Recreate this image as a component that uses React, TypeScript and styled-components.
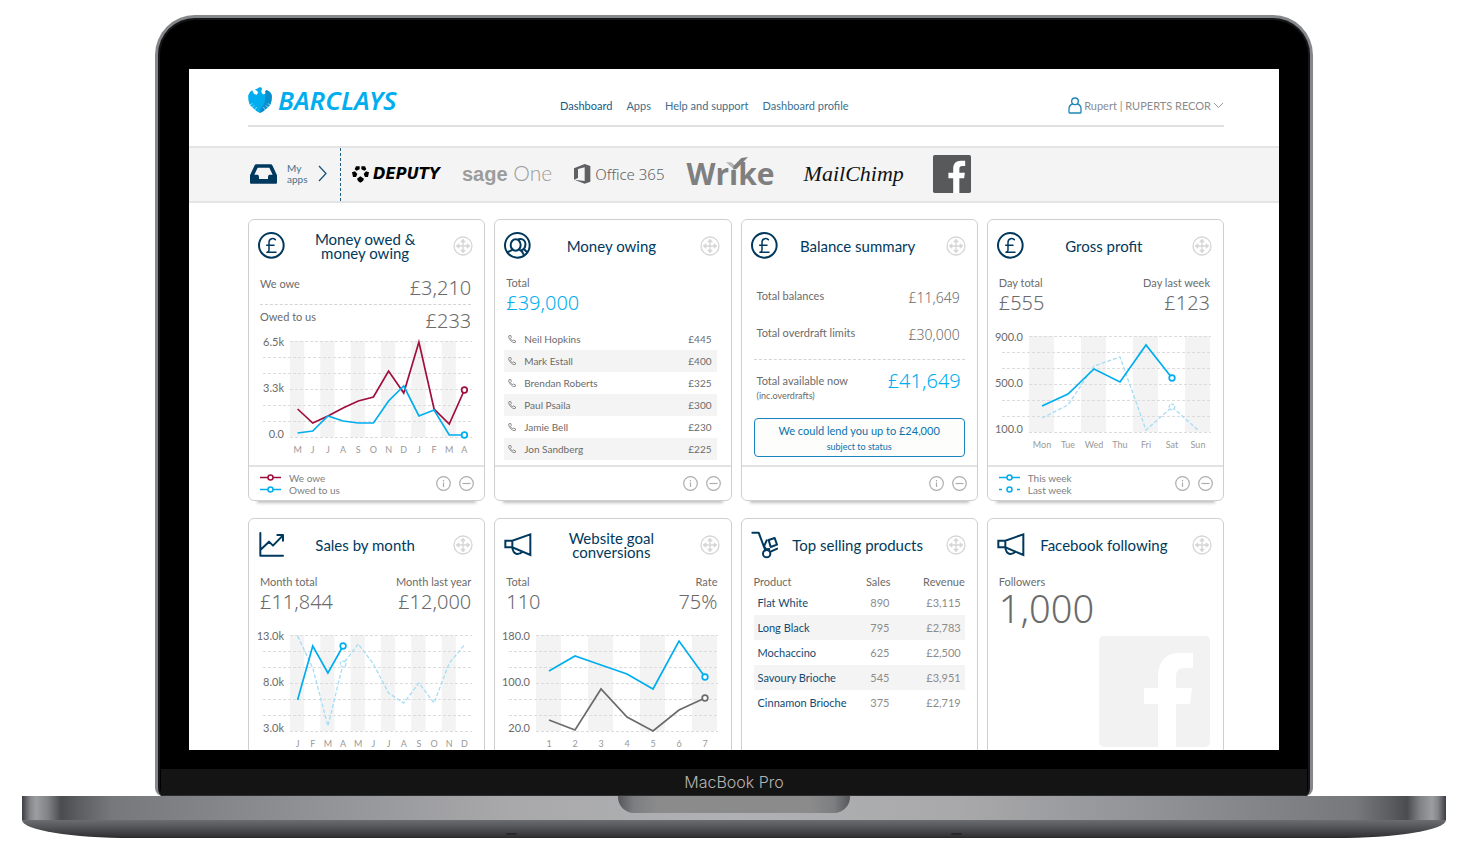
import React from "react";
import styled, { createGlobalStyle } from "styled-components";

const navy = "#00395d";
const cyan = "#00aeef";
const claret = "#a00f3c";
const slate = "#6b6b6b";

const GlobalStyle = createGlobalStyle`
  *, *::before, *::after { box-sizing: border-box; }
  body {
    margin: 0;
    background: #fff;
    color: ${slate};
    font-family: Lato, "Noto Sans", sans-serif;
    font-size: 11px;
    line-height: 16px;
  }
  button { font: inherit; padding: 0; margin: 0; border: 0; background: none; cursor: pointer; }
  a { color: inherit; text-decoration: none; }
  svg { display: block; flex: none; }
  table { border-collapse: collapse; }
`;

/* ---------- Laptop ---------- */

const Laptop = styled.div`
  padding: 15px 22px 24px;
`;

const Lid = styled.div`
  margin: 0 133px;
  border: 3px solid #85878b;
  border-bottom: 0;
  border-radius: 40px 40px 8px 8px;
  background: #000;
  box-shadow: inset 0 0 0 2px #141617;
  overflow: hidden;
`;

const Display = styled.main`
  margin: 51px 31px 19px;
  aspect-ratio: 1090 / 681;
  background: #fff;
  overflow: hidden;
`;

const Chin = styled.div`
  height: 27px;
  margin: 0 3px;
  border-bottom: 1px solid #2c2c2e;
  background: #141414;
  color: #b4b4b6;
  font: 300 16px/27px Inter, sans-serif;
  text-align: center;
`;

const Deck = styled.div`
  display: flex;
  justify-content: center;
  align-items: flex-start;
  height: 24px;
  background: linear-gradient(
    90deg,
    #3c3d42 0,
    #84868a 8px,
    #9c9da1 14px,
    #808286 26px,
    #4b4c50 39px,
    #5c5d60 56px,
    #77787b 90px,
    #929397 300px,
    #a9a9ab 490px,
    #b0b1b4 50%,
    #a9a9ab calc(100% - 490px),
    #929397 calc(100% - 300px),
    #77787b calc(100% - 90px),
    #5c5d60 calc(100% - 56px),
    #4b4c50 calc(100% - 39px),
    #808286 calc(100% - 26px),
    #9c9da1 calc(100% - 14px),
    #84868a calc(100% - 8px),
    #3c3d42 100%
  );
`;

const Notch = styled.div`
  width: 232px;
  height: 17px;
  border-radius: 0 0 16px 16px;
  background: linear-gradient(90deg, #56575a 0, #7d7e80 16px, #8b8b8c 40px, #8b8b8c calc(100% - 40px), #7d7e80 calc(100% - 16px), #56575a 100%);
`;

const Underside = styled.div`
  display: flex;
  justify-content: space-between;
  align-items: flex-end;
  height: 18px;
  padding: 0 484px 3px;
  border-radius: 0 0 110px 110px / 0 0 18px 18px;
  background: linear-gradient(180deg, #6b6c6f 0, #57585c 35%, #3b3b3e 80%, #2a2a2c 100%);
`;

const Foot = styled.span`
  width: 11px;
  height: 2px;
  border-radius: 2px;
  background: #27282a;
`;

/* ---------- Page header ---------- */

const Header = styled.header`
  display: flex;
  align-items: center;
  height: 58px;
  margin: 0 55px 19px 59px;
  padding-top: 17px;
  border-bottom: 2px solid #e0e0e0;
`;

const Brand = styled.a`
  display: flex;
  align-items: center;
  gap: 6px;
  width: 149px;
  margin-bottom: 11px;
  color: ${cyan};
  font: italic 600 26px/26px "Noto Sans", sans-serif;
`;

const Nav = styled.nav`
  display: flex;
  gap: 14px;
  margin-left: 163px;
  white-space: nowrap;
`;

const NavLink = styled.a<{ $current?: boolean }>`
  color: ${(p) => (p.$current ? "#145a84" : "#3d6f8d")};
`;

const UserMenu = styled.button`
  display: flex;
  align-items: center;
  gap: 2px;
  margin-left: auto;
  color: #8c8c8c;
  white-space: nowrap;
`;

/* ---------- Apps bar ---------- */

const AppsBar = styled.section`
  display: flex;
  align-items: center;
  height: 57px;
  padding-left: 61px;
  border-top: 2px solid #e4e4e4;
  border-bottom: 2px solid #e4e4e4;
  background: #f4f4f4;
`;

const MyApps = styled.button`
  display: flex;
  align-items: center;
  align-self: stretch;
  gap: 10px;
  width: 91px;
  padding-bottom: 2px;
  border-right: 1px dashed #1f5d87;
  color: #44718e;
  font-size: 10px;
  line-height: 11px;
  text-align: left;
`;

const AppList = styled.ul`
  display: flex;
  align-items: center;
  gap: 22px;
  margin: 0;
  padding: 0 0 2px 11px;
  list-style: none;
`;

const AppLink = styled.a<{ $wide?: boolean }>`
  display: flex;
  align-items: center;
  gap: 4px;
  padding: 0 ${(p) => (p.$wide ? 7 : 0)}px;
  white-space: nowrap;
`;

const DeputyName = styled.span`
  color: #000;
  font: italic 700 15px/20px "DejaVu Sans", sans-serif;
`;

const SageName = styled.span`
  color: #9c9c9c;
  font: 300 21px/26px Lato, sans-serif;
  b { font: 700 20px/26px "Liberation Sans", sans-serif; }
`;

const OfficeName = styled.span`
  color: #5f6063;
  font: 300 15px/20px "Noto Sans", sans-serif;
`;

const WrikeName = styled.span`
  position: relative;
  color: #7f7f7f;
  font: 700 30px/36px "Open Sans", sans-serif;
  svg { position: absolute; left: 40px; top: 1px; }
`;

const MailChimpName = styled.span`
  color: #111;
  font: italic 400 22px/28px "Liberation Serif", serif;
`;

/* ---------- Cards ---------- */

const Cards = styled.section`
  display: grid;
  grid-template-columns: repeat(4, minmax(0, 1fr));
  grid-auto-rows: 282px;
  gap: 17px 9px;
  padding: 16px 55px 0 59px;
`;

const CardBox = styled.article`
  display: flex;
  flex-direction: column;
  border: 1px solid #cfcfcf;
  border-radius: 6px;
  background: #fff;
  box-shadow: 0 11px 3px -9px rgba(0, 0, 0, 0.25);
`;

const CardHead = styled.header`
  display: grid;
  grid-template-columns: 27px 1fr 20px;
  align-items: center;
  height: 51px;
  padding: 0 11px 0 9px;
`;

const CardTitle = styled.h2`
  margin: 0;
  padding-right: 8px;
  color: ${navy};
  font-size: 15px;
  font-weight: 400;
  line-height: 14px;
  text-align: center;
`;

const CardBody = styled.div`
  flex: 1;
  padding-top: 4px;
`;

const CardFoot = styled.footer`
  display: flex;
  align-items: center;
  gap: 8px;
  height: 35px;
  padding: 0 10px 0 11px;
  border-top: 2px solid #e2e2e2;
`;

const Legend = styled.ul`
  flex: 1;
  margin: 0;
  padding: 0;
  list-style: none;
  color: #808080;
  font-size: 10px;
  line-height: 12px;
  li { display: flex; align-items: center; gap: 8px; }
`;

const Stats = styled.div`
  display: flex;
  justify-content: space-between;
  margin: 0 13px 0 11px;
`;

const Stat = styled.div<{ $right?: boolean }>`
  text-align: ${(p) => (p.$right ? "right" : "left")};
`;

const Figure = styled.div<{ $accent?: boolean; $size?: "m" | "l" | "xl" }>`
  color: ${(p) => (p.$accent ? cyan : slate)};
  font-family: "Noto Sans", sans-serif;
  font-size: ${(p) => (p.$size === "xl" ? 38 : p.$size === "m" ? 14 : 20)}px;
  font-weight: 300;
  line-height: ${(p) => (p.$size === "xl" ? 36 : p.$size === "m" ? 20 : 24)}px;
`;

const OweRow = styled.div`
  display: flex;
  justify-content: space-between;
  align-items: flex-start;
  margin: 0 13px 0 11px;
  padding-top: 1px;
  & + & { padding-top: 4px; margin-top: 4px; border-top: 1px dashed #d4d4d4; }
`;

const DebtorTable = styled.table`
  width: calc(100% - 23px);
  margin: 13px 14px 0 9px;
  font-size: 10px;
  tr:nth-child(even) { background: #f4f4f4; }
  td { height: 22px; padding: 0; }
  td:first-child { width: 20px; padding-left: 4px; }
  td:last-child { padding-right: 5px; text-align: right; }
`;

const BalanceRow = styled.div`
  display: flex;
  justify-content: space-between;
  small { display: block; font-size: 9px; line-height: 14px; }
`;

const Balances = styled.div`
  display: flex;
  flex-direction: column;
  gap: 17px;
  padding: 13px 17px 14px 15px;
`;

const Available = styled.div`
  margin: 0 12px;
  padding: 13px 4px 15px 3px;
  border-top: 1px dashed #d4d4d4;
  ${Figure} { line-height: 16px; }
`;

const LendButton = styled.button`
  display: block;
  width: calc(100% - 24px);
  height: 39px;
  margin: 0 12px;
  border: 1px solid #1c84bd;
  border-radius: 4px;
  background: #fdfdfb;
  color: #0a72ab;
  line-height: 18px;
  small { display: block; font-size: 9px; line-height: 14px; }
`;

const ProductTable = styled.table`
  width: calc(100% - 24px);
  margin: 0 12px;
  table-layout: fixed;
  th { height: 16px; padding: 0; font-weight: 400; text-align: right; }
  th:first-child { width: 96px; text-align: left; }
  th:nth-child(2) { width: 41px; }
  td { height: 25px; padding: 0 4px 0 0; color: #8c8c8c; text-align: right; }
  td:nth-child(2) { padding-right: 1px; }
  td:first-child { padding: 0 0 0 4px; color: #134a72; text-align: left; white-space: nowrap; }
  tbody tr:nth-child(even) { background: #f4f4f4; }
`;

const Watermark = styled.div`
  display: flex;
  justify-content: flex-end;
  margin: 10px 13px 0 0;
`;

/* ---------- Icons ---------- */

const stroke = { fill: "none", stroke: navy, strokeLinecap: "round" as const, strokeLinejoin: "round" as const };

const Eagle = () => (
  <svg width="24" height="26" viewBox="0 0 72 78" aria-hidden="true">
    <path
      fill={cyan}
      d="M20 8 L27 5 L36 0 L42 3 L40 14 L44 22 L52 21 L52 12 L56 9 L66 15 L71 24 Q73 38 67 53 L60 60 L54 66 L46 73 L36 78 L26 73 L18 66 L12 60 L5 53 Q-1 38 1 24 L6 15 L13 10 L18 21 L27 23 L30 16 L27 11 Z"
    />
    <path fill="#0a86c0" d="M52 12 L56 9 L66 15 L71 24 Q73 38 67 53 L60 60 L54 66 L46 73 L36 78 L37 66 Q54 50 52 21 Z" opacity=".8" />
    <path stroke="#fff" strokeWidth="2" fill="none" d="M4 54 L13 50 M11 62 L19 55 M20 69 L26 60 M68 54 L59 50 M61 62 L53 55 M52 69 L46 60" opacity=".8" />
  </svg>
);

const Person = () => (
  <svg width="14" height="17" viewBox="0 0 42 51" fill="none" stroke="#1f85b8" strokeWidth="4" strokeLinejoin="round" aria-hidden="true">
    <circle cx="21" cy="13" r="10" />
    <path d="M14 21 Q3 24 3 35 V46 Q3 48 5 48 H37 Q39 48 39 46 V35 Q39 24 28 21" />
  </svg>
);

const Chevron = ({ down }: { down?: boolean }) =>
  down ? (
    <svg width="11" height="7" viewBox="0 0 11 7" fill="none" stroke="#9a9a9a" aria-hidden="true">
      <path d="M1 1 L5.5 5.5 L10 1" />
    </svg>
  ) : (
    <svg width="9" height="17" viewBox="0 0 9 17" fill="none" stroke="#1d557c" strokeWidth="1.3" aria-hidden="true">
      <path d="M1 1 L8 8.5 L1 16" />
    </svg>
  );

const Tray = () => (
  <svg width="27" height="20" viewBox="0 0 81 60" aria-hidden="true">
    <path fill={navy} fillRule="evenodd" d="M19 1 H62 Q66 1 67 4 L81 34 V56 Q81 59 78 59 H3 Q0 59 0 56 V34 L14 4 Q15 1 19 1 Z M23 11 L13 32 H24 Q27 34 27 40 V45 H54 V40 Q54 34 57 32 H68 L58 11 Z" />
  </svg>
);

const DeputyMark = () => (
  <svg width="17" height="18" viewBox="0 0 51 54" fill="#000" aria-hidden="true">
    <path d="M12 4 H23 V13 L14 17 L8 13 Z M28 4 H39 L43 13 L37 17 L28 13 Z M0 22 L9 19 L16 27 L12 36 L3 36 Z M51 22 L42 19 L35 27 L39 36 L48 36 Z M25 34 L36 41 L33 48 L25 53 L18 48 L15 41 Z" />
  </svg>
);

const OfficeMark = () => (
  <svg width="17" height="20" viewBox="0 0 51 60" fill="#5f6063" aria-hidden="true">
    <path fillRule="evenodd" d="M0 13 L32 0 L49 6 V53 L32 59 L1 47 L32 51 V10 L12 15 V42 L0 47 Z" />
  </svg>
);

const WrikeTick = () => (
  <svg width="22" height="13" viewBox="0 0 66 39" aria-hidden="true">
    <path fill="#f4f4f4" d="M8 8 H40 V39 H8 Z" />
    <path fill="#b5b5b5" d="M0 16 H15 L28 26 L24 37 Z" />
    <path fill="#7f7f7f" d="M66 0 L46 3 L22 28 V38 L32 35 Z" />
  </svg>
);

const FacebookTile = ({ size, fill, glyph }: { size: number; fill: string; glyph: string }) => (
  <svg width={size} height={size} viewBox="0 0 111 111" role="img" aria-label="Facebook">
    <rect width="111" height="111" rx="5" fill={fill} />
    <path fill={glyph} d="M59 111 V68 H45 V52 H59 V41 C59 25 67 17 81 17 H94 V32 H86 C79 32 77 35 77 41 V52 H93 L91 68 H77 V111 Z" />
  </svg>
);

const PoundIcon = () => (
  <svg width="27" height="27" viewBox="0 0 81 81" {...stroke} aria-hidden="true">
    <circle cx="40" cy="40" r="37" strokeWidth="6" />
    <path strokeWidth="4.5" d="M52 23 Q47 19 41 20 Q33 22 33 31 V54 Q33 60 27 61 H54 M26 40 H48" />
  </svg>
);

const DebtorsIcon = () => (
  <svg width="27" height="27" viewBox="0 0 81 81" {...stroke} strokeWidth="6" aria-hidden="true">
    <circle cx="40" cy="40" r="37" />
    <ellipse cx="35" cy="39" rx="15" ry="17" />
    <path d="M44 22 C58 18 66 28 64 40 C63 48 60 52 54 54 M12 60 L26 53 M46 53 Q56 58 58 66 M60 52 L69 60" />
  </svg>
);

const TrendIcon = () => (
  <svg width="27" height="27" viewBox="0 0 81 81" {...stroke} strokeWidth="6" aria-hidden="true">
    <path d="M7 6 V74 H75 M7 57 L33 32 L45 44 L74 14 M58 12 H75 V29" />
  </svg>
);

const MegaphoneIcon = () => (
  <svg width="28" height="27" viewBox="0 0 84 81" {...stroke} strokeWidth="6" strokeLinejoin="miter" aria-hidden="true">
    <path d="M4 29 H25 L79 10 V72 L25 49 H4 Z M25 29 V49 M25 50 Q27 66 38 69 Q49 70 55 62" />
  </svg>
);

const TrolleyIcon = () => (
  <svg width="27" height="29" viewBox="0 0 81 87" {...stroke} strokeWidth="6" aria-hidden="true">
    <path d="M4 8 H23 L43 61 M59 65 L79 56 M53 30 L71 24 L78 44 L59 51 Z M47 31 L39 49 L46 58 L55 57" />
    <circle cx="47" cy="71" r="11" />
  </svg>
);

const MoveIcon = () => (
  <svg width="20" height="20" viewBox="0 0 60 60" fill="none" stroke="#d6d6d6" strokeWidth="4" aria-hidden="true">
    <circle cx="30" cy="30" r="27" />
    <path d="M30 12 V48 M12 30 H48" />
    <path fill="#d6d6d6" strokeWidth="2" d="M30 9 L37 18 H23 Z M30 51 L37 42 H23 Z M9 30 L18 23 V37 Z M51 30 L42 23 V37 Z" />
  </svg>
);

const InfoIcon = () => (
  <svg width="15" height="15" viewBox="0 0 15 15" fill="none" stroke="#adadad" strokeWidth="1.2" aria-hidden="true">
    <circle cx="7.5" cy="7.5" r="6.8" />
    <path d="M7.5 6.5 V11 M7.5 4 V5.4" />
  </svg>
);

const MinusIcon = () => (
  <svg width="15" height="15" viewBox="0 0 15 15" fill="none" stroke="#adadad" strokeWidth="1.2" aria-hidden="true">
    <circle cx="7.5" cy="7.5" r="6.8" />
    <path d="M3.5 7.5 H11.5" />
  </svg>
);

const PhoneIcon = () => (
  <svg width="8" height="8" viewBox="0 0 24 24" fill="none" stroke="#8a8a8a" strokeWidth="3" aria-hidden="true">
    <path d="M3 2 L8 1 L10 8 L7 11 L13 17 L16 15 L23 18 L22 22 Q18 24 13 21 Q3 14 2 6 Z" />
  </svg>
);

const Swatch = ({ color, dashed }: { color: string; dashed?: boolean }) => (
  <svg width="21" height="7" viewBox="0 0 21 7" fill="none" stroke={color} strokeWidth="1.5" aria-hidden="true">
    <path d={dashed ? "M0 3.5 H3 M18 3.5 H21" : "M0 3.5 H8 M13 3.5 H21"} />
    <circle cx="10.5" cy="3.5" r="2.5" />
  </svg>
);

/* ---------- Line chart ---------- */

type Series = { color: string; points: number[]; marker: number; dashed?: boolean };

const PLOT_LEFT = 41;
const PLOT_WIDTH = 182;
const PLOT_TOP = 8;
const GRID_STEP = 16;

const AxisText = styled.text<{ $small?: boolean }>`
  fill: ${(p) => (p.$small ? "#999" : slate)};
  font-size: ${(p) => (p.$small ? 9 : 11)}px;
`;

function LineChart({ ticks, labels, series }: { ticks: string[]; labels: string[]; series: Series[] }) {
  const step = PLOT_WIDTH / labels.length;
  const x = (i: number) => PLOT_LEFT + step * (i + 0.5);
  const y = (v: number) => PLOT_TOP + v;
  return (
    <svg width="235" height="124" viewBox="0 0 235 124" role="img" aria-label="Line chart">
      {labels.map((_, i) =>
        i % 2 === 0 ? (
          <rect key={i} x={PLOT_LEFT + step * i} y={PLOT_TOP} width={step - 1} height={GRID_STEP * 6} fill="#f3f3f3" />
        ) : null
      )}
      {[0, 1, 2, 3, 4, 5, 6].map((i) => (
        <line
          key={i}
          x1={i % 3 === 0 ? PLOT_LEFT : 14}
          x2={PLOT_LEFT + PLOT_WIDTH}
          y1={PLOT_TOP + GRID_STEP * i + 0.5}
          y2={PLOT_TOP + GRID_STEP * i + 0.5}
          stroke="#dcdcdc"
          strokeDasharray="3 2"
        />
      ))}
      {ticks.map((t, i) => (
        <AxisText key={t} x={35} y={PLOT_TOP + 5 + i * 46} textAnchor="end">
          {t}
        </AxisText>
      ))}
      {labels.map((t, i) => (
        <AxisText key={i} $small x={x(i)} y={PLOT_TOP + 112} textAnchor="middle">
          {t}
        </AxisText>
      ))}
      {series.map((s, k) => (
        <g key={k} fill="none" stroke={s.color} strokeWidth={s.dashed ? 1.3 : 1.7}>
          <polyline points={s.points.map((v, i) => `${x(i)},${y(v)}`).join(" ")} strokeDasharray={s.dashed ? "4 2" : undefined} />
          <circle cx={x(s.marker)} cy={y(s.points[s.marker])} r="2.8" fill="#fff" strokeDasharray={s.dashed ? "3 1" : undefined} />
        </g>
      ))}
    </svg>
  );
}

const ChartWrap = styled.div<{ $flush?: boolean }>`
  margin-top: ${(p) => (p.$flush ? 0 : 13)}px;
`;

/* ---------- Card shell ---------- */

type CardProps = { icon: React.ReactNode; title: React.ReactNode; legend?: [string, string, boolean?][]; children: React.ReactNode };

function Card({ icon, title, legend = [], children }: CardProps) {
  return (
    <CardBox>
      <CardHead>
        {icon}
        <CardTitle>{title}</CardTitle>
        <button aria-label="Move card">
          <MoveIcon />
        </button>
      </CardHead>
      <CardBody>{children}</CardBody>
      <CardFoot>
        <Legend>
          {legend.map(([name, color, dashed]) => (
            <li key={name}>
              <Swatch color={color} dashed={dashed} />
              {name}
            </li>
          ))}
        </Legend>
        <button aria-label="Information">
          <InfoIcon />
        </button>
        <button aria-label="Remove card">
          <MinusIcon />
        </button>
      </CardFoot>
    </CardBox>
  );
}

const debtors = [
  ["Neil Hopkins", "£445"],
  ["Mark Estall", "£400"],
  ["Brendan Roberts", "£325"],
  ["Paul Psaila", "£300"],
  ["Jamie Bell", "£230"],
  ["Jon Sandberg", "£225"],
];

const products = [
  ["Flat White", "890", "£3,115"],
  ["Long Black", "795", "£2,783"],
  ["Mochaccino", "625", "£2,500"],
  ["Savoury Brioche", "545", "£3,951"],
  ["Cinnamon Brioche", "375", "£2,719"],
];

const pale = "#a6dcf5";

export default function App() {
  return (
    <Laptop>
      <GlobalStyle />
      <Lid>
        <Display>
          <Header>
            <Brand href="#">
              <Eagle />
              BARCLAYS
            </Brand>
            <Nav>
              <NavLink href="#" $current>Dashboard</NavLink>
              <NavLink href="#">Apps</NavLink>
              <NavLink href="#">Help and support</NavLink>
              <NavLink href="#">Dashboard profile</NavLink>
            </Nav>
            <UserMenu>
              <Person />
              Rupert | RUPERTS RECOR
              <Chevron down />
            </UserMenu>
          </Header>

          <AppsBar>
            <MyApps>
              <Tray />
              <span>My<br />apps</span>
              <Chevron />
            </MyApps>
            <AppList>
              <li><AppLink href="#"><DeputyMark /><DeputyName>DEPUTY</DeputyName></AppLink></li>
              <li><AppLink href="#"><SageName><b>sage</b> One</SageName></AppLink></li>
              <li><AppLink href="#"><OfficeMark /><OfficeName>Office 365</OfficeName></AppLink></li>
              <li><AppLink href="#"><WrikeName>Wrike<WrikeTick /></WrikeName></AppLink></li>
              <li><AppLink href="#" $wide><MailChimpName>MailChimp</MailChimpName></AppLink></li>
              <li><AppLink href="#"><FacebookTile size={38} fill="#58595b" glyph="#fff" /></AppLink></li>
            </AppList>
          </AppsBar>

          <Cards>
            <Card
              icon={<PoundIcon />}
              title={<>Money owed &amp;<br />money owing</>}
              legend={[["We owe", claret], ["Owed to us", cyan]]}
            >
              <OweRow>We owe<Figure>£3,210</Figure></OweRow>
              <OweRow>Owed to us<Figure>£233</Figure></OweRow>
              <ChartWrap $flush>
                <LineChart
                  ticks={["6.5k", "3.3k", "0.0"]}
                  labels={["M", "J", "J", "A", "S", "O", "N", "D", "J", "F", "M", "A"]}
                  series={[
                    { color: claret, points: [68, 82, 75, 67, 60, 56, 30, 52, 1, 68, 83, 49], marker: 11 },
                    { color: cyan, points: [92, 90, 75, 80, 82, 82, 60, 45, 75, 69, 94, 94], marker: 11 },
                  ]}
                />
              </ChartWrap>
            </Card>

            <Card icon={<DebtorsIcon />} title="Money owing">
              <Stats>
                <Stat>Total<Figure $accent>£39,000</Figure></Stat>
              </Stats>
              <DebtorTable>
                <tbody>
                  {debtors.map(([name, sum]) => (
                    <tr key={name}>
                      <td><PhoneIcon /></td>
                      <td>{name}</td>
                      <td>{sum}</td>
                    </tr>
                  ))}
                </tbody>
              </DebtorTable>
            </Card>

            <Card icon={<PoundIcon />} title="Balance summary">
              <Balances>
                <BalanceRow>Total balances<Figure $size="m">£11,649</Figure></BalanceRow>
                <BalanceRow>Total overdraft limits<Figure $size="m">£30,000</Figure></BalanceRow>
              </Balances>
              <Available>
                <BalanceRow>
                  <span>Total available now<small>(inc.overdrafts)</small></span>
                  <Figure $accent>£41,649</Figure>
                </BalanceRow>
              </Available>
              <LendButton>We could lend you up to £24,000<small>subject to status</small></LendButton>
            </Card>

            <Card icon={<PoundIcon />} title="Gross profit" legend={[["This week", cyan], ["Last week", cyan, true]]}>
              <Stats>
                <Stat>Day total<Figure>£555</Figure></Stat>
                <Stat $right>Day last week<Figure>£123</Figure></Stat>
              </Stats>
              <ChartWrap>
                <LineChart
                  ticks={["900.0", "500.0", "100.0"]}
                  labels={["Mon", "Tue", "Wed", "Thu", "Fri", "Sat", "Sun"]}
                  series={[
                    { color: pale, dashed: true, points: [82, 69, 30, 21, 94, 71, 94], marker: 5 },
                    { color: cyan, points: [70, 58, 33, 46, 9, 42], marker: 5 },
                  ]}
                />
              </ChartWrap>
            </Card>

            <Card icon={<TrendIcon />} title="Sales by month">
              <Stats>
                <Stat>Month total<Figure>£11,844</Figure></Stat>
                <Stat $right>Month last year<Figure>£12,000</Figure></Stat>
              </Stats>
              <ChartWrap>
                <LineChart
                  ticks={["13.0k", "8.0k", "3.0k"]}
                  labels={["J", "F", "M", "A", "M", "J", "J", "A", "S", "O", "N", "D"]}
                  series={[
                    { color: pale, dashed: true, points: [1, 33, 91, 29, 9, 29, 58, 68, 48, 68, 28, 10], marker: 3 },
                    { color: cyan, points: [65, 11, 38, 11], marker: 3 },
                  ]}
                />
              </ChartWrap>
            </Card>

            <Card icon={<MegaphoneIcon />} title={<>Website goal<br />conversions</>}>
              <Stats>
                <Stat>Total<Figure>110</Figure></Stat>
                <Stat $right>Rate<Figure>75%</Figure></Stat>
              </Stats>
              <ChartWrap>
                <LineChart
                  ticks={["180.0", "100.0", "20.0"]}
                  labels={["1", "2", "3", "4", "5", "6", "7"]}
                  series={[
                    { color: cyan, points: [36, 21, 30, 39, 54, 6, 42], marker: 6 },
                    { color: "#6b6b6b", points: [85, 95, 54, 82, 96, 75, 63], marker: 6 },
                  ]}
                />
              </ChartWrap>
            </Card>

            <Card icon={<TrolleyIcon />} title="Top selling products">
              <ProductTable>
                <thead>
                  <tr><th>Product</th><th>Sales</th><th>Revenue</th></tr>
                </thead>
                <tbody>
                  {products.map(([name, sales, revenue]) => (
                    <tr key={name}>
                      <td><a href="#">{name}</a></td>
                      <td>{sales}</td>
                      <td>{revenue}</td>
                    </tr>
                  ))}
                </tbody>
              </ProductTable>
            </Card>

            <Card icon={<MegaphoneIcon />} title="Facebook following">
              <Stats>
                <Stat>Followers<Figure $size="xl">1,000</Figure></Stat>
              </Stats>
              <Watermark>
                <FacebookTile size={111} fill="#f2f2f2" glyph="#fff" />
              </Watermark>
            </Card>
          </Cards>
        </Display>
        <Chin>MacBook Pro</Chin>
      </Lid>
      <Deck>
        <Notch />
      </Deck>
      <Underside>
        <Foot />
        <Foot />
      </Underside>
    </Laptop>
  );
}
